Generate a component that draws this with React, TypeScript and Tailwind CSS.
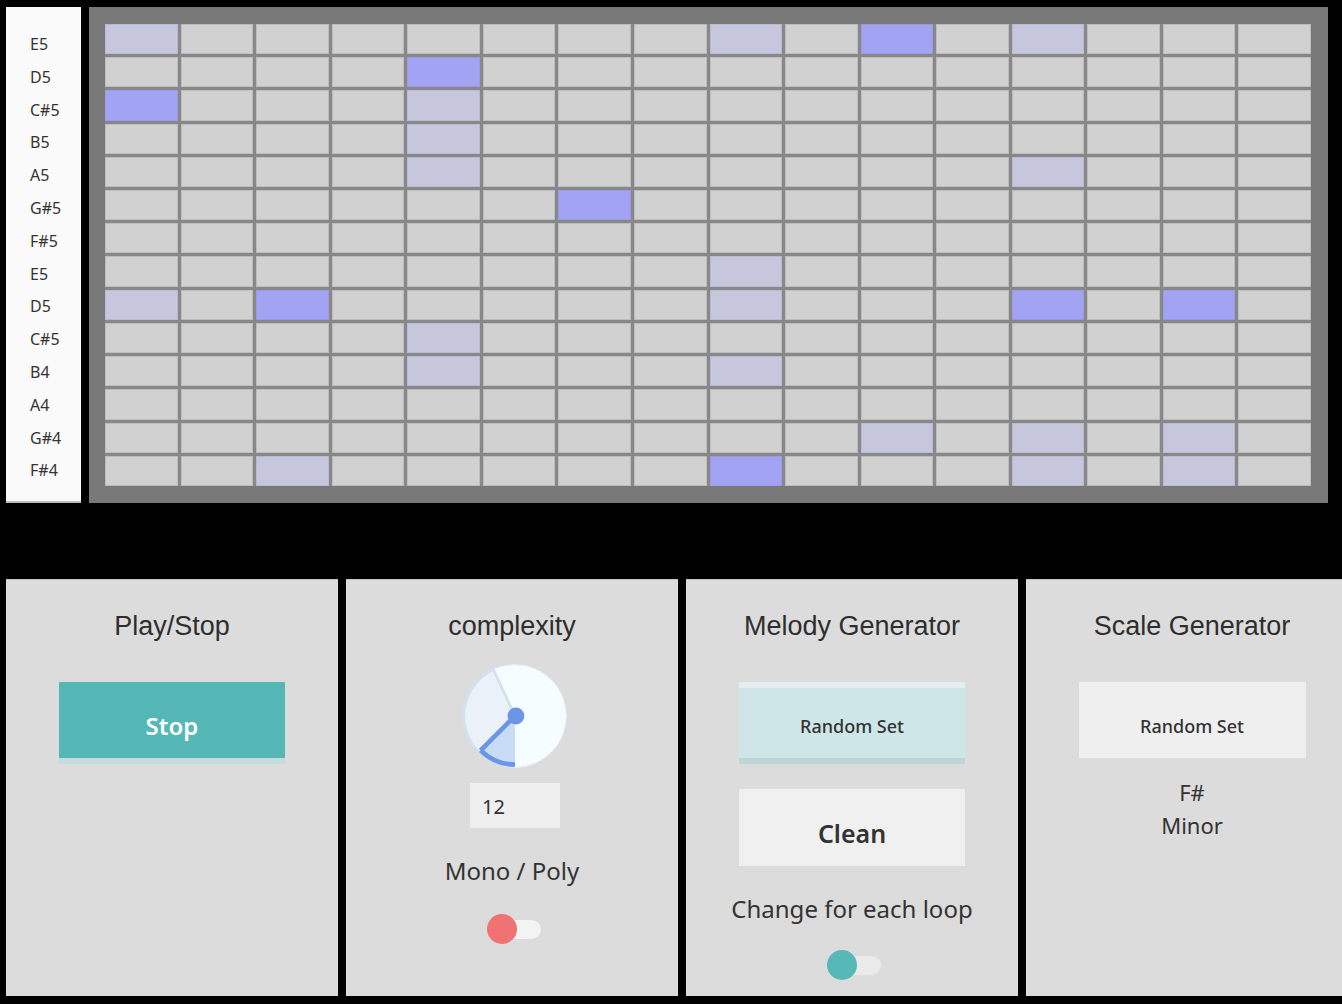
import React from "react";

const labels = ["E5", "D5", "C#5", "B5", "A5", "G#5", "F#5", "E5", "D5", "C#5", "B4", "A4", "G#4", "F#4"];

// 2 = bright, 1 = faded
const active: Record<string, number> = {
  "0-10": 2, "1-4": 2, "2-0": 2, "5-6": 2, "8-2": 2, "8-12": 2, "8-14": 2, "13-8": 2,
  "0-0": 1, "0-8": 1, "0-12": 1, "2-4": 1, "3-4": 1, "4-4": 1, "4-12": 1, "7-8": 1,
  "8-0": 1, "8-8": 1, "9-4": 1, "10-4": 1, "10-8": 1, "12-10": 1, "12-12": 1, "12-14": 1,
  "13-2": 1, "13-12": 1, "13-14": 1,
};

const sans = "font-['Noto_Sans','Open_Sans',sans-serif]";
const arial = "font-['Liberation_Sans',Arial,sans-serif]";

function Cell({ r, c }: { r: number; c: number }) {
  const v = active[`${r}-${c}`] ?? 0;
  const cls =
    v === 2
      ? "bg-[#a3a3f3] border-[#9a9ae6]"
      : v === 1
      ? "bg-[#c6c6dd] border-[#b9b9d6]"
      : "bg-[#d1d1d1] border-[#bdbdbd]";
  return <div className={`border ${cls}`} />;
}

function Dial() {
  return (
    <svg width="112" height="112" viewBox="0 0 120 120">
      <circle cx="60" cy="60" r="55" fill="#f4fdff" stroke="#e6eef4" strokeWidth="1" />
      <path d="M60,60 L21.1,98.9 A55,55 0 0 1 36.8,10.2 Z" fill="#eaf1f8" stroke="#d3e0ee" strokeWidth="3" />
      <path d="M60,60 L60,115 A55,55 0 0 1 21.1,98.9 Z" fill="#c8dcf5" />
      <path d="M60,112 A52,52 0 0 1 23.2,96.8" fill="none" stroke="#6b96e6" strokeWidth="5" />
      <line x1="60" y1="60" x2="23.2" y2="96.8" stroke="#6b96e6" strokeWidth="5" />
      <circle cx="61" cy="60" r="9" fill="#6b96e6" />
    </svg>
  );
}

function Toggle({ knob, track }: { knob: string; track: string }) {
  return (
    <div className="relative w-[56px] h-[30px]">
      <div className={`absolute left-[14px] top-[6px] w-[40px] h-[19px] rounded-full ${track}`} />
      <div className={`absolute left-0 top-0 w-[30px] h-[30px] rounded-full ${knob}`} />
    </div>
  );
}

function Panel({ title, children }: { title: string; children?: React.ReactNode }) {
  return (
    <div className="w-[332px] h-[417px] shrink-0 bg-[#dcdcdc] border-t border-[#c4c4c4] flex flex-col items-center pt-[31px]">
      <div className={`${arial} text-[27px] leading-[30px] text-[#2e2e2e]`}>{title}</div>
      {children}
    </div>
  );
}

export default function App() {
  return (
    <div className="w-[1342px] h-[1004px] bg-black overflow-hidden">
      <div className="flex gap-[8px] pt-[7px] pl-[6px]">
        <div className="w-[75px] h-[496px] bg-[#fafafa] border-b-2 border-[#bdbdbd] flex flex-col pt-[21px] pl-[24px]">
          {labels.map((l, i) => (
            <div key={i} className={`${sans} text-[16px] leading-[32.8px] h-[32.8px] text-[#333] flex items-center`}>
              {l}
            </div>
          ))}
        </div>
        <div className="w-[1239px] h-[496px] bg-[#787878] pt-[17px] pl-[16px]">
          <div className="w-[1206px] h-[462px] grid grid-cols-[repeat(16,1fr)] grid-rows-[repeat(14,1fr)] gap-x-[3px] gap-y-[3px] bg-[#888888]">
            {labels.map((_, r) =>
              Array.from({ length: 16 }).map((__, c) => <Cell key={`${r}-${c}`} r={r} c={c} />)
            )}
          </div>
        </div>
      </div>

      <div className="flex gap-[8px] pl-[6px] mt-[76px]">
        <Panel title="Play/Stop">
          <div className="mt-[41px] w-[226px] h-[82px] flex flex-col">
            <div className="h-[76px] bg-[#56b8b6] flex items-center justify-center pt-[12px]">
              <span className={`${sans} text-[24px] font-semibold text-white`}>Stop</span>
            </div>
            <div className="h-[6px] bg-[#c4dcdc]" />
          </div>
        </Panel>

        <Panel title="complexity">
          <div className="mt-[19px] ml-[6px]">
            <Dial />
          </div>
          <div className="mt-[11px] ml-[6px] w-[90px] h-[45px] bg-[#efefef] flex items-center pl-[12px] pt-[2px]">
            <span className={`${sans} text-[20px] text-[#333]`}>12</span>
          </div>
          <div className={`${sans} mt-[27px] text-[24px] leading-[32px] text-[#333]`}>Mono / Poly</div>
          <div className="mt-[27px] ml-[6px]">
            <Toggle knob="bg-[#f07272]" track="bg-[#f3f3f3]" />
          </div>
        </Panel>

        <Panel title="Melody Generator">
          <div className="mt-[41px] w-[226px] h-[82px] flex flex-col">
            <div className="h-[6px] bg-[#e4eeee]" />
            <div className="h-[70px] bg-[#cfe6e8] flex items-center justify-center pt-[6px]">
              <span className={`${sans} text-[18px] font-medium text-[#333]`}>Random Set</span>
            </div>
            <div className="h-[6px] bg-[#bcd6d8]" />
          </div>
          <div className="mt-[25px] w-[226px] h-[77px] bg-[#f0f0f0] flex items-center justify-center pt-[12px]">
            <span className={`${sans} text-[25px] font-semibold text-[#333]`}>Clean</span>
          </div>
          <div className={`${sans} mt-[27px] text-[24px] leading-[32px] text-[#333]`}>Change for each loop</div>
          <div className="mt-[25px] ml-[6px]">
            <Toggle knob="bg-[#57b9b7]" track="bg-[#eaeaea]" />
          </div>
        </Panel>

        <Panel title="Scale Generator">
          <div className="mt-[41px] w-[227px] h-[76px] bg-[#efefef] flex items-center justify-center pt-[12px]">
            <span className={`${sans} text-[18px] font-medium text-[#333]`}>Random Set</span>
          </div>
          <div className={`${sans} mt-[18px] text-[22px] leading-[33px] text-[#333] text-center`}>
            F#
            <br />
            Minor
          </div>
        </Panel>
      </div>
    </div>
  );
}
